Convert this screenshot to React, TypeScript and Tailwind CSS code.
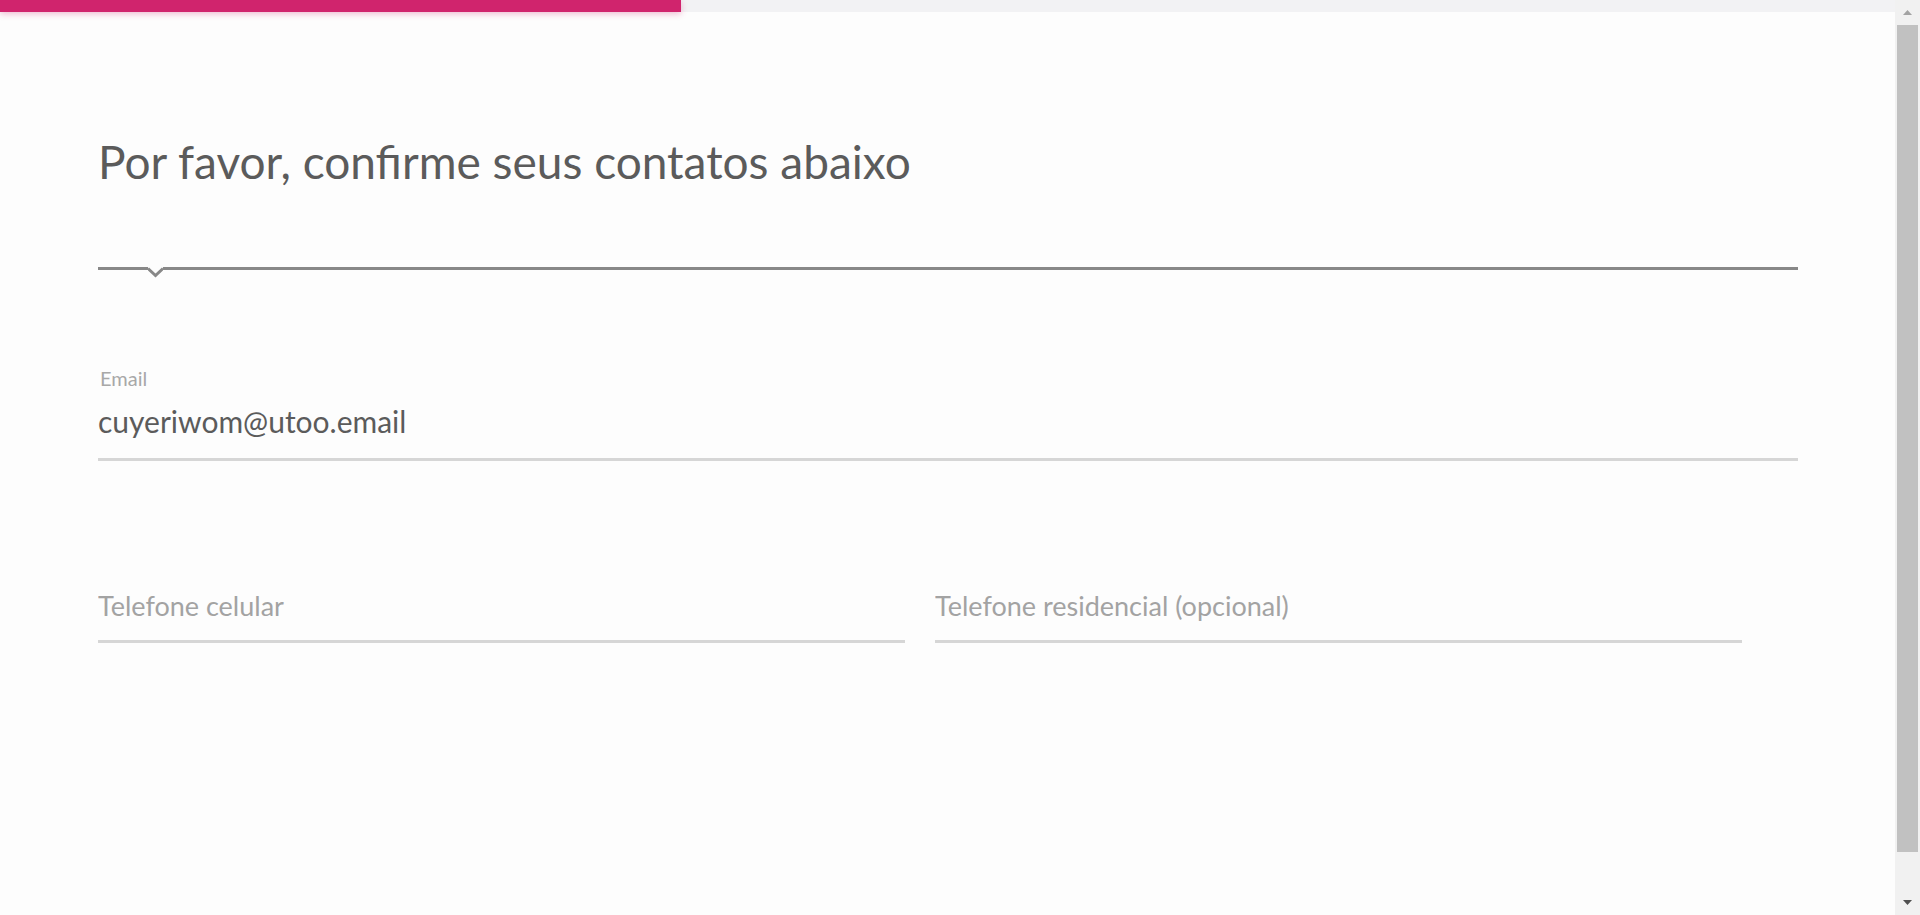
import { ReactNode } from "react";

const font = { fontFamily: 'Lato, "Open Sans", sans-serif' };

const Field = ({ children, className = "" }: { children: ReactNode; className?: string }) => (
  <div className={`border-b-[3px] border-[#d6d6d6] ${className}`}>{children}</div>
);

const Scrollbar = () => (
  <div className="flex w-[25px] shrink-0 flex-col bg-[#f1f1f1]">
    <div className="flex h-[25px] items-center justify-center">
      <svg width="9" height="5" viewBox="0 0 9 5">
        <polygon points="0,5 4.5,0 9,5" fill="#a3a3a3" />
      </svg>
    </div>
    <div className="mx-[2px] h-[827px] bg-[#c1c1c1]" />
    <div className="flex-1" />
    <div className="flex h-[25px] items-center justify-center">
      <svg width="9" height="5" viewBox="0 0 9 5">
        <polygon points="0,0 9,0 4.5,5" fill="#505050" />
      </svg>
    </div>
  </div>
);

const App = () => {
  return (
    <div className="flex h-[915px] w-full overflow-hidden bg-[#fdfdfd]" style={font}>
      <div className="flex min-w-0 flex-1 flex-col">
        {/* Progress */}
        <div className="flex h-[12px] bg-[#f2f2f4]">
          <div className="w-[681px] bg-[#d0246d] shadow-[0_2px_6px_rgba(208,36,109,0.3)]" />
        </div>

        <main className="pl-[98px] pr-[97px]">
          <h1 className="mt-[122px] text-[46px] leading-[55px] font-normal text-[#5b5b5b]">
            Por favor, confirme seus contatos abaixo
          </h1>

          {/* Divider with notch */}
          <div className="mt-[78px] flex items-start">
            <div className="h-[3px] w-[50px] bg-[#888888]" />
            <svg width="15" height="11" viewBox="0 0 15 11" className="shrink-0">
              <polyline points="0,1.5 7.5,8.5 15,1.5" fill="none" stroke="#888888" strokeWidth="3" />
            </svg>
            <div className="h-[3px] flex-1 bg-[#888888]" />
          </div>

          {/* Email */}
          <div className="mt-[88px]">
            <div className="pl-[2px] text-[20px] leading-[24px] text-[#a8a8a8]">Email</div>
            <Field className="mt-[13px] pb-[19px]">
              <input
                className="block h-[36px] w-full bg-transparent text-[30px] leading-[36px] text-[#5b5b5b] outline-none"
                defaultValue="cuyeriwom@utoo.email"
                style={font}
              />
            </Field>
          </div>

          {/* Phones */}
          <div className="mt-[129px] flex gap-[30px]">
            <Field className="w-[807px] pb-[18px]">
              <input
                className="block h-[32px] w-full bg-transparent text-[27px] leading-[32px] text-[#5b5b5b] outline-none placeholder:text-[#a3a3a3]"
                placeholder="Telefone celular"
                style={font}
              />
            </Field>
            <Field className="w-[807px] pb-[18px]">
              <input
                className="block h-[32px] w-full bg-transparent text-[27px] leading-[32px] text-[#5b5b5b] outline-none placeholder:text-[#a3a3a3]"
                placeholder="Telefone residencial (opcional)"
                style={font}
              />
            </Field>
          </div>
        </main>
      </div>
      <Scrollbar />
    </div>
  );
};

export default App;
